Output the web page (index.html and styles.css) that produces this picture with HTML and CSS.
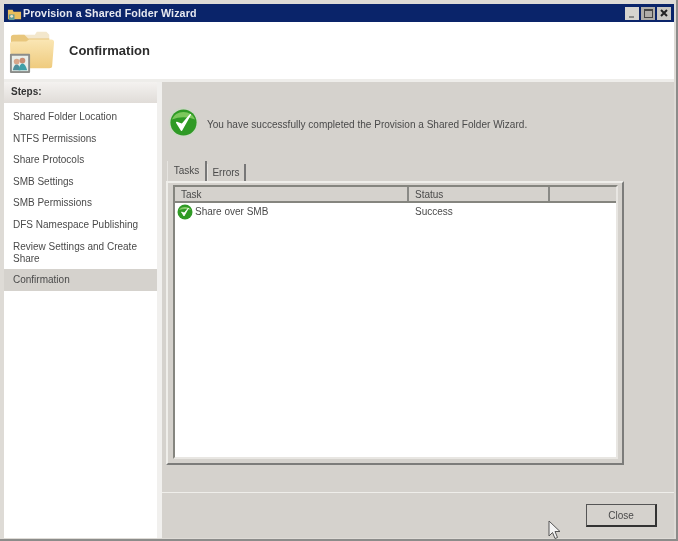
FILE: index.html
```html
<!DOCTYPE html>
<html lang="en">
<head>
<meta charset="utf-8">
<title>Provision a Shared Folder Wizard</title>
<link rel="stylesheet" href="styles.css">
</head>
<body>
<div class="window">
  <div class="titlebar">
    <svg class="title-icon" viewBox="0 0 16 16"><path d="M1 4h5l1 2h8v8H1z" fill="#e8bd5c"/><rect x="2" y="9" width="6" height="6" fill="#5d9a9a"/><circle cx="5" cy="11" r="1.5" fill="#f3e3c0"/></svg>
    <span class="title-text">Provision a Shared Folder Wizard</span>
    <div class="controls">
      <span class="ctl ctl-min"><i></i></span>
      <span class="ctl ctl-max"><i></i></span>
      <span class="ctl ctl-close"><svg viewBox="0 0 10 10"><path d="M2 2l6 6M8 2l-6 6" stroke="#222" stroke-width="2"/></svg></span>
    </div>
  </div>
  <header class="banner">
    <svg class="folder" viewBox="0 0 48 50">
      <defs>
        <linearGradient id="front" x1="0" y1="0" x2="0" y2="1"><stop offset="0" stop-color="#fae6b4"/><stop offset="1" stop-color="#efcb7e"/></linearGradient>
      </defs>
      <path d="M9 9h18l2-3h10l3 3v20H9z" fill="#f3e7cc"/>
      <path d="M2 12q0-3 3-3h11l4 4h22v8H2z" fill="#e8c67c"/>
      <path d="M1 19q0-3 3-3h14l3-2h23q3 0 3 3l-2 25q0 2-3 2H5q-3 0-3-3z" fill="url(#front)"/>
      <rect x="1" y="29" width="21" height="20" rx="1" fill="#8b8d8a"/>
      <rect x="3" y="31" width="17" height="16" fill="#e9eee9"/>
      <circle cx="8" cy="37" r="3" fill="#d8a78a"/><path d="M4 46q1-6 4-6t4 6z" fill="#4f8f9c"/>
      <circle cx="14" cy="36" r="3" fill="#c98d72"/><path d="M10 46q1-7 4-7t5 7z" fill="#3fa0a8"/>
    </svg>
    <h1 class="banner-title">Confirmation</h1>
  </header>
  <div class="content">
    <nav class="sidebar">
      <div class="steps-head">Steps:</div>
      <ul class="steps">
        <li>Shared Folder Location</li>
        <li>NTFS Permissions</li>
        <li>Share Protocols</li>
        <li>SMB Settings</li>
        <li>SMB Permissions</li>
        <li>DFS Namespace Publishing</li>
        <li class="two-line">Review Settings and Create Share</li>
        <li class="current">Confirmation</li>
      </ul>
    </nav>
    <main class="main">
      <div class="pane">
        <div class="message">
          <svg class="ok-large" viewBox="0 0 32 32">
            <circle cx="16" cy="16" r="15.5" fill="#cfd6c8"/>
            <circle cx="16" cy="16" r="13.5" fill="#2f9a25"/>
            <path d="M4 13a12.500 11 0 0 1 24 0q-12-5-24 0z" fill="#7cc85c"/>
            <path d="M9 16l5 8 9-16-8.500 10z" fill="#fff" stroke="#fff" stroke-width="1.500" stroke-linejoin="round"/>
          </svg>
          <span class="message-text">You have successfully completed the Provision a Shared Folder Wizard.</span>
        </div>
        <div class="tabs">
          <span class="tab tab-active">Tasks</span>
          <span class="tab">Errors</span>
        </div>
        <div class="tab-panel">
          <div class="list">
            <div class="list-head">
              <span class="col col-task">Task</span>
              <span class="col col-status">Status</span>
              <span class="col col-rest"></span>
            </div>
            <div class="list-row">
              <span class="cell cell-task">
                <svg class="ok-small" viewBox="0 0 16 16"><circle cx="8" cy="8" r="7.500" fill="#2f9a25"/><path d="M2 6a6.500 5 0 0 1 12 0q-6-2-12 0z" fill="#86cc68"/><path d="M4.500 8l2.500 4 4.500-8-4.300 5z" fill="#fff" stroke="#fff" stroke-width=".8"/></svg>
                Share over SMB
              </span>
              <span class="cell cell-status">Success</span>
            </div>
          </div>
        </div>
      </div>
      <footer class="footer">
        <button class="close-btn" type="button">Close</button>
      </footer>
      <svg class="cursor" viewBox="0 0 13 20"><path d="M1 1v15l3.500-3.500 2.500 6 2.500-1-2.500-6H12z" fill="#f4f4f4" stroke="#555" stroke-width="1"/></svg>
    </main>
  </div>
</div>
</body>
</html>
```
FILE: styles.css
```css
* { box-sizing: border-box; }
html, body { margin: 0; padding: 0; }
body {
  width: 678px;
  height: 541px;
  overflow: hidden;
  background: #fff;
  font-family: "Liberation Sans", Arial, sans-serif;
  font-size: 10px;
  color: #4a4a4a;
}
.window {
  position: relative;
  width: 678px;
  height: 541px;
  display: flex;
  flex-direction: column;
  padding: 4px 2px 1px 4px;
  background: #dedbd6;
  border-right: 2px solid #8c8c8a;
  border-bottom: 2px solid #8c8c8a;
  filter: blur(0.6px);
}
.titlebar {
  flex: 0 0 18px;
  display: flex;
  align-items: center;
  background: #0a246a;
  color: #e6e8f0;
  padding: 0 3px 0 3px;
}
.title-icon { width: 15px; height: 15px; flex: none; }
.title-text { margin-left: 1px; font-size: 10.700px; font-weight: bold; white-space: nowrap; letter-spacing: 0.1px; }
.controls { margin-left: auto; display: flex; gap: 2px; }
.ctl {
  width: 14px;
  height: 13px;
  background: #c9c7c2;
  display: flex;
  align-items: center;
  justify-content: center;
  position: relative;
}
.ctl svg { width: 10px; height: 10px; }
.ctl-min { background: #d6d4cf; }
.ctl-min i { position: absolute; left: 4px; bottom: 2px; width: 5px; height: 2px; background: #8a8a88; }
.ctl-max { background: #aeaca8; }
.ctl-max i { width: 9px; height: 9px; border: 1px solid #444; border-top-width: 2px; }
.banner {
  flex: 0 0 57px;
  display: flex;
  align-items: center;
  background: #fff;
}
.folder { width: 46px; height: 48px; margin: -1px 0 0 5px; flex: none; }
.banner-title { margin: 0 0 0 14px; font-size: 13px; font-weight: bold; color: #2c2c2c; }
.content {
  flex: 1;
  min-height: 0;
  display: flex;
  border-top: 3px solid #eeedea;
}
.sidebar { width: 158px; flex: none; background: #fff; border-right: 5px solid #f1f0ee; }
.steps-head {
  height: 21px;
  line-height: 20px;
  padding-left: 7px;
  font-weight: bold;
  color: #333;
  background: linear-gradient(#f4f2f0, #e0dcd8);
}
.steps { list-style: none; margin: 3px 0 0; padding: 0; }
.steps li {
  height: 21.6px;
  line-height: 21px;
  padding-left: 9px;
  white-space: nowrap;
}
.steps li.two-line {
  height: 33px;
  padding: 5px 9px 0;
  line-height: 12px;
  white-space: normal;
}
.steps li.current { background: #d5d2cd; height: 22px; }
.main {
  flex: 1;
  min-width: 0;
  position: relative;
  display: flex;
  flex-direction: column;
  background: #d5d2cd;
}
.pane {
  flex: 1;
  min-height: 0;
  padding: 24px 0 0 4px;
  border-bottom: 1px solid #efeeea;
  display: flex;
  flex-direction: column;
  align-items: flex-start;
}
.message { display: flex; align-items: center; height: 32px; }
.ok-large { width: 31px; height: 31px; flex: none; margin-left: 2px; }
.message-text { margin-left: 8px; padding-top: 4px; white-space: nowrap; font-size: 10.050px; }
.tabs { display: flex; align-items: flex-end; margin: 23px 0 0 1px; height: 20px; }
.tab {
  height: 17px;
  line-height: 17px;
  width: 39px;
  text-align: center;
  border-right: 2px solid #777;
  border-left: 1px solid #e6e4e0;
}
.tab-active { height: 20px; line-height: 20px; width: 40px; background: #d5d2cd; }
.tab-panel {
  width: 458px;
  height: 284px;
  padding: 2px 4px 4px 5px;
  background: #d5d2cd;
  border: 2px solid;
  border-color: #efeeea #7c7c7a #7c7c7a #efeeea;
}
.list {
  height: 100%;
  background: #fff;
  border: 2px solid;
  border-color: #85857f #e8e6e2 #e8e6e2 #85857f;
}
.list-head { display: flex; height: 16px; background: #d5d2cd; border-bottom: 2px solid #85857f; }
.col { line-height: 15px; padding-left: 6px; border-right: 2px solid #8a8a86; }
.col-task { width: 234px; }
.col-status { width: 141px; }
.col-rest { flex: 1; border-right: 0; }
.list-row { display: flex; height: 17px; align-items: center; }
.cell-task { width: 234px; display: flex; align-items: center; gap: 2px; padding-left: 2px; }
.cell-status { padding-left: 6px; }
.ok-small { width: 16px; height: 16px; flex: none; }
.footer {
  flex: 0 0 45px;
  display: flex;
  justify-content: flex-end;
  align-items: flex-start;
  padding: 11px 17px 0 0;
}
.close-btn {
  width: 71px;
  height: 23px;
  padding: 0;
  background: #d5d2cd;
  border: 1px solid #555;
  border-right: 2px solid #333;
  border-bottom: 2px solid #333;
  font: inherit;
  color: #4a4a4a;
}
.cursor { position: absolute; left: 386px; top: 438px; width: 13px; height: 20px; }
```
